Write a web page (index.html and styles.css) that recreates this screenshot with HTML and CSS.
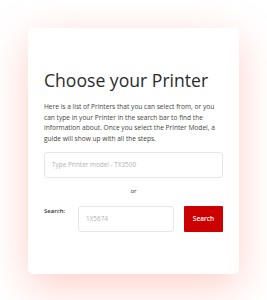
FILE: index.html
```html
<!DOCTYPE html>
<html lang="en">
<head>
  <meta charset="utf-8">
  <link rel="stylesheet" href="styles.css">
</head>
<body>
  <div class="card">
    <h2 class="title">Choose your Printer</h2>
    <p class="intro">Here is a list of Printers that you can select from, or you can type in your Printer in the search bar to find the information about. Once you select the Printer Model, a guide will show up with all the steps.</p>
    <form>
      <input type="text" class="model-input" placeholder="Type Printer model - TX3500">
      <p class="or">or</p>
      <div class="search-row">
        <label for="searchBox">Search:</label>
        <input type="text" id="searchBox" class="search-input" placeholder="1X5674">
        <button type="button" class="search-btn">Search</button>
      </div>
    </form>
  </div>
</body>
</html>
```

FILE: styles.css
```css
body {
  margin: 0;
  padding: 28px 0 26px;
  background: #fff;
  font-family: "Open Sans", "Noto Sans", sans-serif;
  color: #333;
}

.card {
  width: 211px;
  height: 246px;
  box-sizing: border-box;
  margin: 0 auto;
  padding: 41px 16px 0;
  background: #fff;
  border-radius: 5px;
  box-shadow: 0 12px 40px rgba(255, 135, 115, 0.4);
}

.title {
  margin: 0;
  font-size: 17.6px;
  font-weight: 400;
  line-height: 22px;
  color: #2b2b2b;
}

.intro {
  margin: 11px 0 0;
  font-size: 6.6px;
  line-height: 10.7px;
  color: #444;
}

form {
  margin-top: 7px;
}

input {
  display: block;
  box-sizing: border-box;
  height: 26px;
  padding: 0 7px;
  border: 1px solid #e6e6ea;
  border-radius: 3px;
  font-family: inherit;
  font-size: 6.4px;
  color: #333;
  outline: none;
}

input::placeholder {
  color: #b0b0b6;
}

.model-input {
  width: 100%;
}

.or {
  margin: 8px 0 0;
  text-align: center;
  font-size: 6px;
  line-height: 10px;
}

.search-row {
  display: flex;
  align-items: flex-start;
  margin-top: 10px;
}

.search-row label {
  width: 34px;
  padding-top: 1px;
  font-size: 6px;
  font-weight: 600;
  line-height: 8px;
}

.search-input {
  width: 96px;
}

.search-btn {
  width: 39px;
  height: 26px;
  margin-left: auto;
  padding: 0;
  border: none;
  border-radius: 1px;
  background: #cc0000;
  color: #fff;
  font-family: inherit;
  font-size: 6.5px;
  font-weight: 600;
}
```
